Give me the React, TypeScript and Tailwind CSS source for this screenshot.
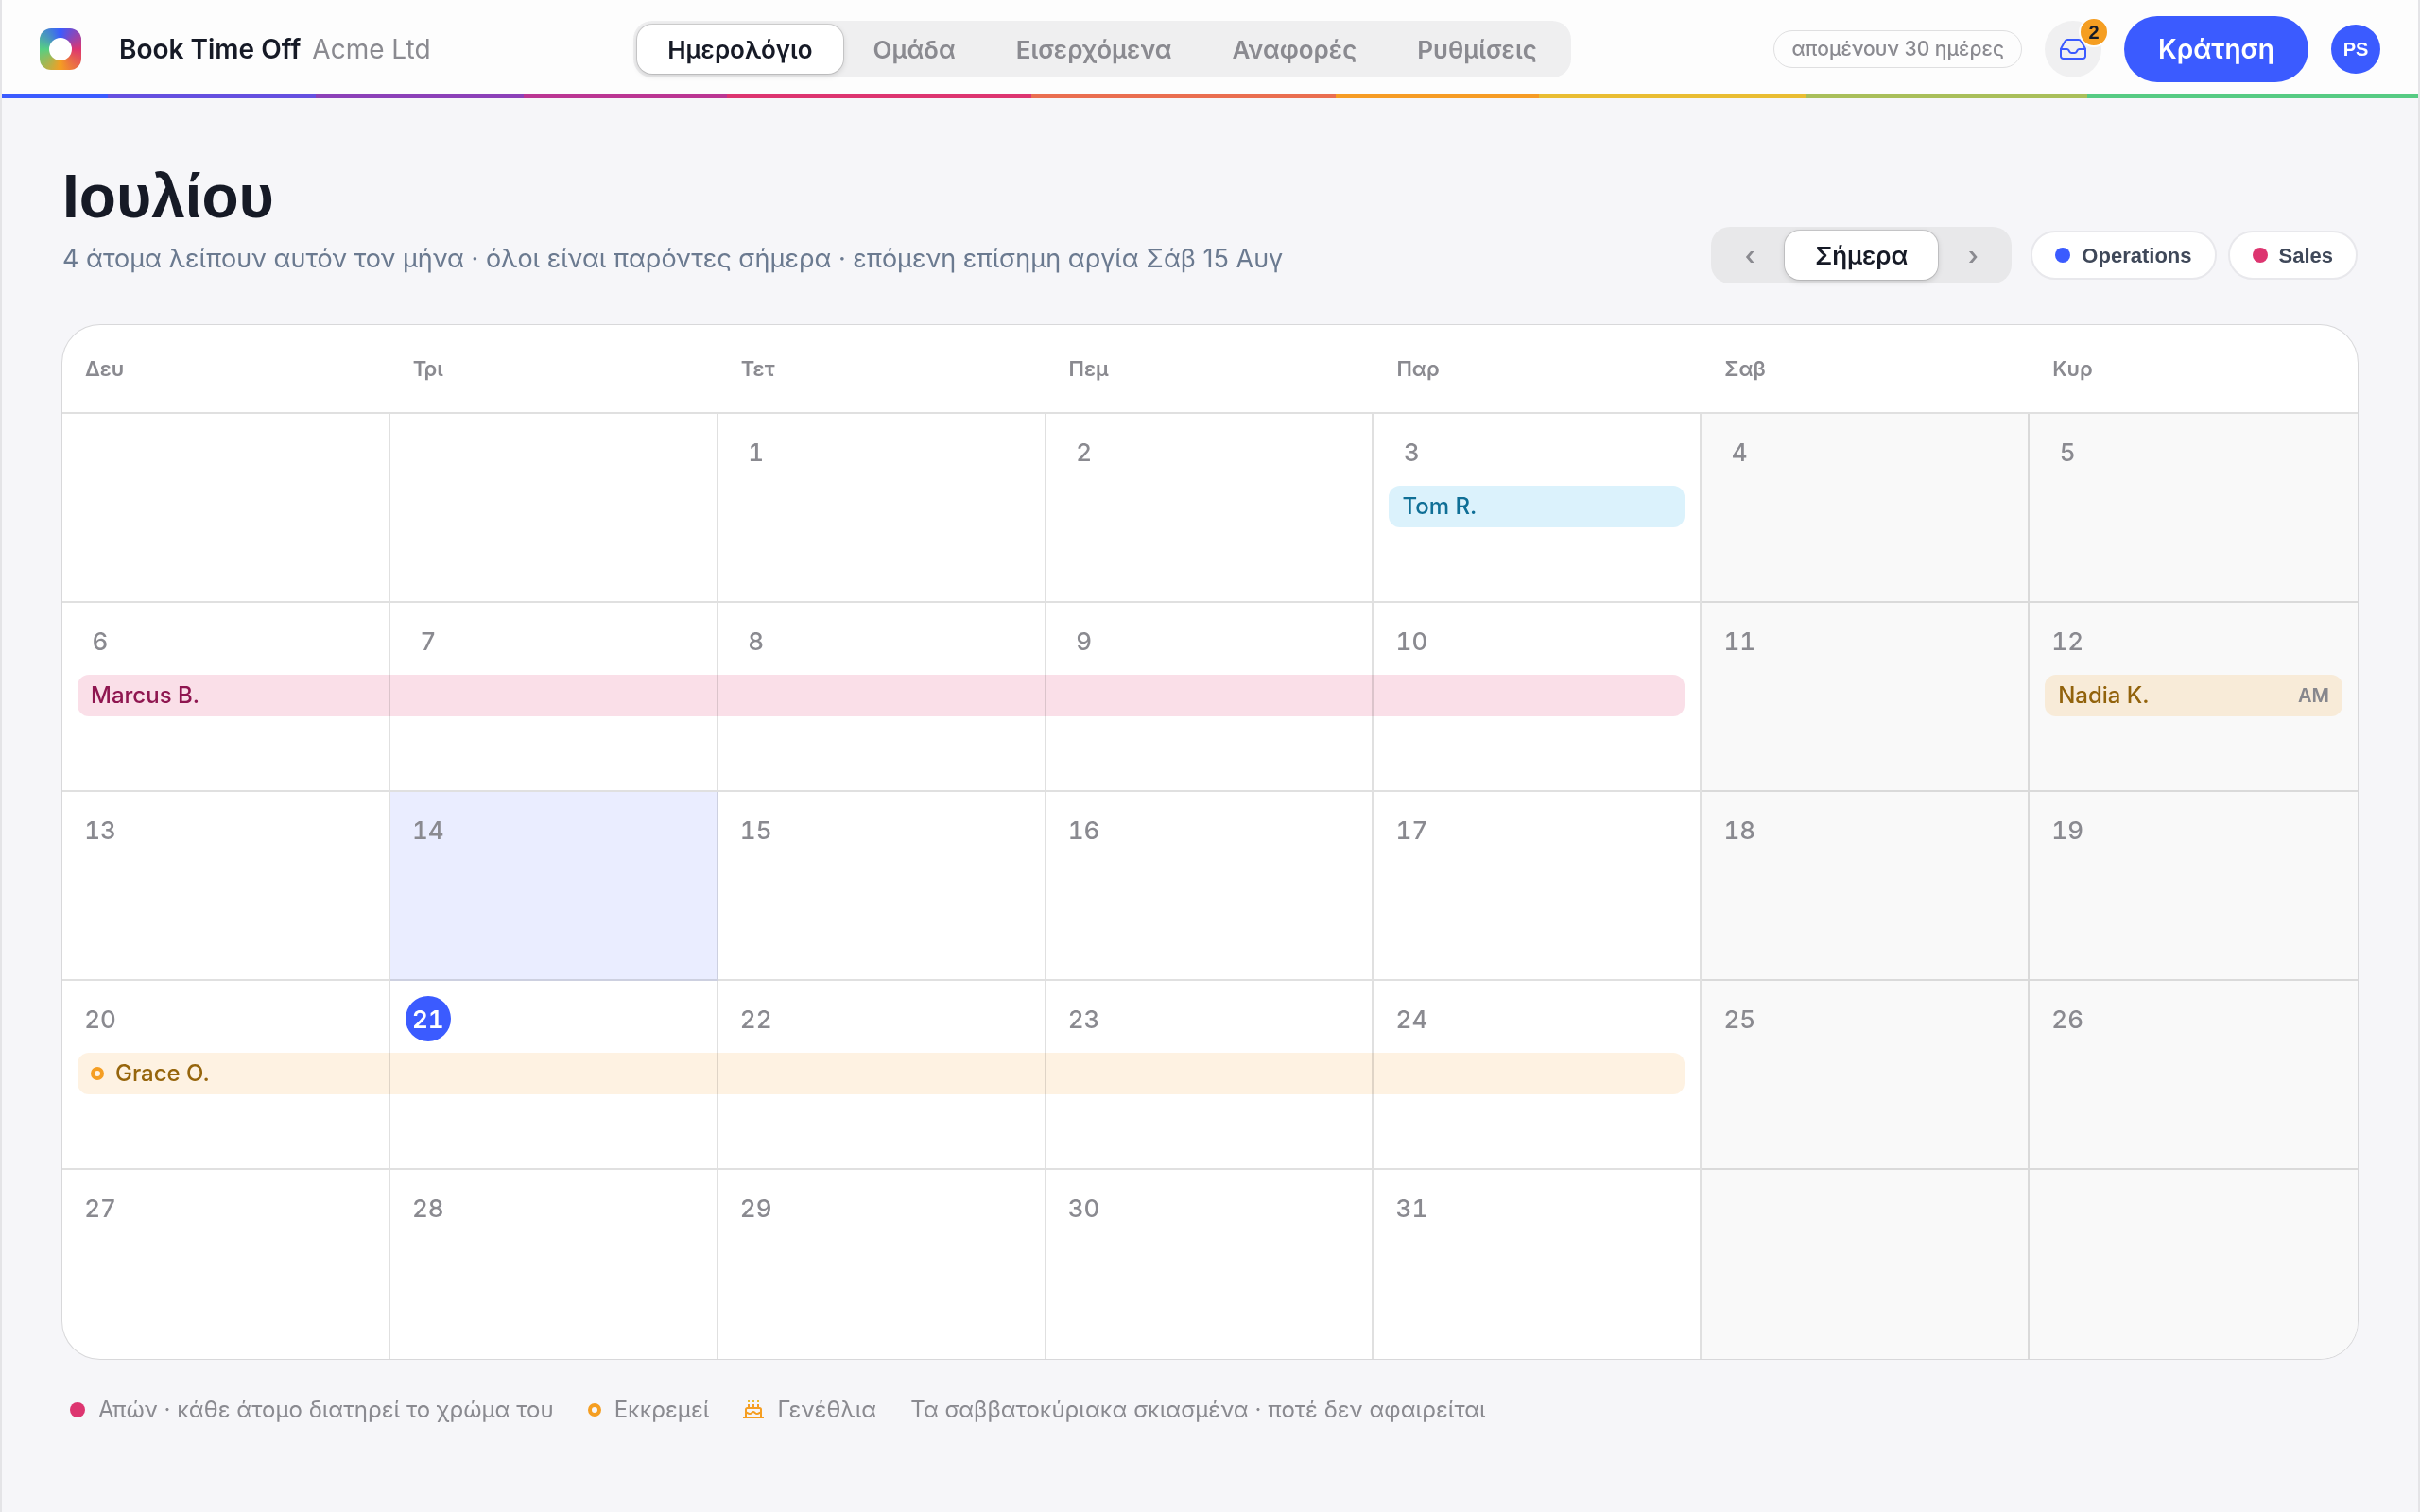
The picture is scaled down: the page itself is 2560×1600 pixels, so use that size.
import type { ReactNode } from "react";

type Leave = {
  name: string;
  from: number;
  span: number;
  bar: string;
  text: string;
  pending?: boolean;
  note?: string;
};

type Week = { days: (number | null)[]; leave?: Leave };

const tabs = ["Ημερολόγιο", "Ομάδα", "Εισερχόμενα", "Αναφορές", "Ρυθμίσεις"];
const weekdays = ["Δευ", "Τρι", "Τετ", "Πεμ", "Παρ", "Σαβ", "Κυρ"];
const teams = [
  { name: "Operations", dot: "bg-[#3b5bff]" },
  { name: "Sales", dot: "bg-[#dd3570]" },
];

const weeks: Week[] = [
  {
    days: [null, null, 1, 2, 3, 4, 5],
    leave: { name: "Tom R.", from: 4, span: 1, bar: "bg-[#0ea5e9]/15", text: "text-[#0f6f96]" },
  },
  {
    days: [6, 7, 8, 9, 10, 11, 12],
    leave: { name: "Marcus B.", from: 0, span: 5, bar: "bg-[#dd3570]/16", text: "text-[#8f1650]" },
  },
  { days: [13, 14, 15, 16, 17, 18, 19] },
  {
    days: [20, 21, 22, 23, 24, 25, 26],
    leave: { name: "Grace O.", from: 0, span: 5, bar: "bg-[#f59e22]/13", text: "text-[#96650c]", pending: true },
  },
  { days: [27, 28, 29, 30, 31, null, null] },
];

const halfDay: Leave = {
  name: "Nadia K.",
  from: 6,
  span: 1,
  bar: "bg-[#f59e22]/15",
  text: "text-[#96650c]",
  note: "AM",
};

const TODAY = 21;
const SELECTED = 14;

function Logo() {
  return (
    <div className="flex size-11 items-center justify-center rounded-xl bg-[conic-gradient(#3b5bff,#dd3570_25%,#f59e22_50%,#56cf83_75%,#3b5bff)]">
      <div className="size-6 rounded-full bg-white" />
    </div>
  );
}

function InboxIcon() {
  return (
    <svg viewBox="0 0 28 22" className="h-[22px] w-7" fill="none" stroke="currentColor" strokeWidth="2" strokeLinecap="round" strokeLinejoin="round">
      <path d="M1 11h6.500c1 0 1.500.4 2 1.300l.8 1.400c.5.900 1 1.300 2 1.300h3.400c1 0 1.500-.4 2-1.300l.8-1.400c.5-.9 1-1.300 2-1.300H27" />
      <path d="M8.300 1h11.400c1.300 0 2.300.6 2.900 1.800l3.800 6.700c.4.700.6 1.300.6 2.100V18.500a2.500 2.500 0 0 1-2.500 2.500h-21A2.500 2.500 0 0 1 1 18.500v-6.900c0-.8.2-1.400.6-2.100l3.800-6.700C6 1.600 7 1 8.300 1z" />
    </svg>
  );
}

function CakeIcon() {
  return (
    <svg viewBox="0 0 22 20" className="h-5 w-[22px] text-[#f59e22]" fill="none" stroke="currentColor" strokeWidth="2">
      <path d="M0 18h22M3 18V9.500a1.500 1.500 0 0 1 1.500-1.500h13a1.500 1.500 0 0 1 1.500 1.500V18M3 12.500c1.500 0 2 1.500 4 1.500s2.500-2 4-2 2 2 4 2 2.500-1.500 4-1.500M6 8V4M11 8V4M16 8V4" />
      <path d="M6 2V0M11 2V0M16 2V0" stroke="#e9bd32" />
    </svg>
  );
}

function Ring() {
  return <span className="size-3.5 shrink-0 rounded-full border-4 border-[#f59e22]" />;
}

function LeaveBar({ leave }: { leave: Leave }) {
  return (
    <div className={`mx-4 flex h-11 items-center rounded-xl px-3.5 text-2xl font-medium mix-blend-multiply ${leave.bar} ${leave.text}`}>
      {leave.pending && (
        <span className="mr-3 flex">
          <Ring />
        </span>
      )}
      <span>{leave.name}</span>
      {leave.note && <span className="ml-auto text-xl font-semibold text-[#8a8a90]">{leave.note}</span>}
    </div>
  );
}

function LegendItem({ mark, children }: { mark?: ReactNode; children: ReactNode }) {
  return (
    <li className="flex items-center gap-3.5">
      {mark}
      {children}
    </li>
  );
}

function Header() {
  return (
    <header className="relative">
      <div className="flex h-26 items-center justify-between bg-[#fdfdfd] px-10">
        <div className="flex items-center gap-10">
          <Logo />
          <div className="flex items-baseline gap-3 text-[28px]">
            <span className="font-semibold text-[#161a26]">Book Time Off</span>
            <span className="text-[#8a8a90]">Acme Ltd</span>
          </div>
        </div>
        <nav className="flex h-15 items-center rounded-[20px] bg-[#efeff0] p-1">
          {tabs.map((tab, i) => (
            <button
              key={tab}
              type="button"
              className={
                i === 0
                  ? "h-13 rounded-2xl bg-white px-8 text-[26px] font-semibold text-[#161a26] shadow-[0_0_0_1px_rgba(0,0,0,0.12),0_2px_6px_rgba(0,0,0,0.15)]"
                  : "h-13 px-8 text-[26px] font-semibold text-[#8a8a90]"
              }
            >
              {tab}
            </button>
          ))}
        </nav>
        <div className="flex items-center justify-end gap-6">
          <span className="flex h-10 items-center rounded-full border border-[#dfdfe0] px-[18px] text-[21px] font-medium text-[#8a8a90]">
            απομένουν 30 ημέρες
          </span>
          <button type="button" aria-label="Εισερχόμενα" className="relative flex size-15 items-center justify-center rounded-full bg-[#f0f0f1] text-[#3b5bff]">
            <InboxIcon />
            <span className="absolute -top-1 -right-2 flex size-8 items-center justify-center rounded-full border-2 border-[#fdfdfd] bg-[#f59e22] font-['Liberation_Sans',sans-serif] text-xl font-bold text-[#161a26]">
              2
            </span>
          </button>
          <button type="button" className="h-[70px] rounded-full bg-[#3b5bff] px-9 text-[28px] font-semibold text-white">
            Κράτηση
          </button>
          <button type="button" className="size-13 rounded-full bg-[#3b5bff] font-['Liberation_Sans',sans-serif] text-xl font-bold text-white">
            PS
          </button>
        </div>
      </div>
      <div className="absolute inset-x-0 bottom-0 h-1 bg-[linear-gradient(90deg,#3b5bff_4.4%,#6550e0_4.4%_13%,#8c41b8_13%_21.6%,#bb3693_21.6%_30%,#dd3570_30%_42.6%,#ea6e50_42.6%_55.2%,#f69c24_55.2%_63.6%,#e9bd32_63.6%_74.7%,#a9bf5a_74.7%_86.3%,#56cb83_86.3%)]" />
    </header>
  );
}

function Calendar() {
  return (
    <section className="mt-11 overflow-hidden rounded-[40px] bg-white shadow-[0_0_0_1px_#d8d8da]">
      <div className="grid h-[94px] grid-cols-7 items-center border-b-2 border-black/12">
        {weekdays.map((d) => (
          <div key={d} className="pl-6 text-[22px] font-semibold text-[#8a8a90]">
            {d}
          </div>
        ))}
      </div>
      {weeks.map((week, w) => (
        <div key={w} className="relative grid h-50 grid-cols-7">
          {week.days.map((day, i) => (
            <div
              key={i}
              className={`p-4 ${i < 6 ? "border-r-2" : ""} ${w < 4 ? "border-b-2" : ""} border-black/12 ${
                day === SELECTED ? "bg-[#eaedff]" : i > 4 ? "bg-[#f9f9f9]" : ""
              }`}
            >
              {day !== null && (
                <span
                  className={`flex size-12 items-center justify-center rounded-full text-[26px] tabular-nums ${
                    day === TODAY ? "bg-[#3b5bff] font-semibold text-white" : "font-medium text-[#8a8a90]"
                  }`}
                >
                  {day}
                </span>
              )}
            </div>
          ))}
          <div className="absolute inset-x-0 top-19 grid grid-cols-7 mix-blend-multiply">
            {week.leave && (
              <div
                className={`border-r-2 border-transparent ${
                  week.leave.span === 5 ? "col-span-5 col-start-1" : "col-start-5"
                }`}
              >
                <LeaveBar leave={week.leave} />
              </div>
            )}
            {w === 1 && (
              <div className="col-start-7">
                <LeaveBar leave={halfDay} />
              </div>
            )}
          </div>
        </div>
      ))}
    </section>
  );
}

export default function App() {
  return (
    <div className="min-h-screen border-x-2 border-[#e4e4e7] bg-[#f6f6f9] font-['Inter',sans-serif]">
      <Header />
      <main className="px-16 pt-[68px]">
        <div className="flex items-end justify-between">
          <div>
            <h1 className="font-['Liberation_Sans',sans-serif] text-[64px] leading-[72px] font-bold text-[#161a26]">Ιουλίου</h1>
            <p className="mt-1 text-[27px] leading-[52px] text-[#6b7a90]">
              4 άτομα λείπουν αυτόν τον μήνα · όλοι είναι παρόντες σήμερα · επόμενη επίσημη αργία Σάβ 15 Αυγ
            </p>
          </div>
          <div className="flex items-center gap-5">
            <div className="flex h-15 items-center rounded-[20px] bg-[#e8e8ea] p-1 text-[26px]">
              <button type="button" aria-label="Προηγούμενος μήνας" className="h-13 w-[74px] font-semibold text-[#8a8a90]">
                ‹
              </button>
              <button
                type="button"
                className="h-13 rounded-2xl bg-white px-8 font-semibold text-[#161a26] shadow-[0_0_0_1px_rgba(0,0,0,0.12),0_2px_6px_rgba(0,0,0,0.15)]"
              >
                Σήμερα
              </button>
              <button type="button" aria-label="Επόμενος μήνας" className="h-13 w-[74px] font-semibold text-[#8a8a90]">
                ›
              </button>
            </div>
            <div className="flex gap-3">
              {teams.map((team) => (
                <button
                  key={team.name}
                  type="button"
                  className="flex h-13 items-center gap-3 rounded-full border-2 border-[#e8e8ec] bg-white px-6 font-['Liberation_Sans',sans-serif] text-[22px] font-bold text-[#3f4859]"
                >
                  <span className={`size-4 rounded-full ${team.dot}`} />
                  {team.name}
                </button>
              ))}
            </div>
          </div>
        </div>
        <Calendar />
        <ul className="mt-[38px] flex items-center gap-9 pl-2 text-2xl text-[#8a8a90]">
          <LegendItem mark={<span className="size-4 rounded-full bg-[#dd3570]" />}>
            Απών · κάθε άτομο διατηρεί το χρώμα του
          </LegendItem>
          <LegendItem mark={<Ring />}>Εκκρεμεί</LegendItem>
          <LegendItem mark={<CakeIcon />}>Γενέθλια</LegendItem>
          <LegendItem>Τα σαββατοκύριακα σκιασμένα · ποτέ δεν αφαιρείται</LegendItem>
        </ul>
      </main>
    </div>
  );
}
